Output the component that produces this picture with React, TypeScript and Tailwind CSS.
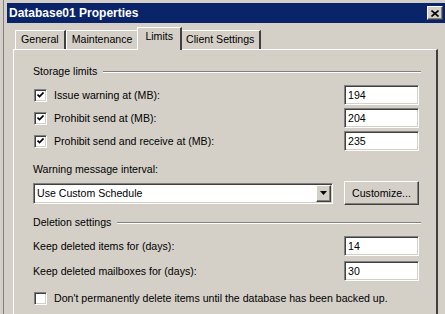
import React from 'react';

const raised =
  'border border-t-white border-l-white border-r-[#404040] border-b-[#404040] shadow-[inset_-1px_-1px_0_#808080]';
const sunken =
  'border border-t-[#808080] border-l-[#808080] border-r-white border-b-white shadow-[inset_1px_1px_0_#404040,inset_-1px_-1px_0_#d4d0c8]';

const CheckBox = ({ checked }: { checked?: boolean }) => (
  <div className={`w-[13px] h-[13px] bg-white flex items-center justify-center shrink-0 ${sunken}`}>
    {checked && (
      <svg width="7" height="7" viewBox="0 0 7 7">
        <path d="M0.5 2.5 L2.5 4.5 L6.5 0.5" fill="none" stroke="#000" strokeWidth="1.7" />
      </svg>
    )}
  </div>
);

const TextBox = ({ value }: { value: string }) => (
  <div className={`w-[75px] h-[20px] bg-white flex items-center pl-[3px] ${sunken}`}>{value}</div>
);

const GroupHeader = ({ title }: { title: string }) => (
  <div className="flex items-center h-[13px]">
    <span>{title}</span>
    <div className="flex-1 ml-[6px] h-[2px] border-t border-t-[#808080] border-b border-b-white" />
  </div>
);

const CheckRow = ({ label, value }: { label: string; value: string }) => (
  <div className="flex items-center h-[20px]">
    <div className="ml-[1px]">
      <CheckBox checked />
    </div>
    <span className="ml-[7px] flex-1">{label}</span>
    <div className="mr-[2px]">
      <TextBox value={value} />
    </div>
  </div>
);

const Tab = ({ label, active }: { label: string; active?: boolean }) => (
  <div
    className={
      active
        ? 'relative z-10 h-[23px] -mx-[2px] px-[7px] pt-[2px] bg-[#d4d0c8] border-t border-l border-t-white border-l-white border-r-2 border-r-[#404040]'
        : 'h-[19px] mt-[3px] px-[5px] pt-[2px] border-t border-l border-t-white border-l-white border-r-2 border-r-[#404040]'
    }
  >
    {label}
  </div>
);

export default function App() {
  return (
    <div
      className="w-[445px] h-[314px] overflow-hidden bg-[#d4d0c8] text-black text-[10.6px] leading-[13px] pl-[3px]"
      style={{ fontFamily: '"Liberation Sans", Arial, sans-serif' }}
    >
      <div className="h-full border-l border-l-[#808080] pl-[3px] pt-[3px] flex flex-col">
        <div className="h-[20px] bg-[#0a246a] flex items-center justify-between pl-[2px] pr-[2px]">
          <span className="text-white font-bold text-[12px]">Database01 Properties</span>
          <div className={`w-[16px] h-[14px] bg-[#d4d0c8] flex items-center justify-center ${raised}`}>
            <svg width="8" height="7" viewBox="0 0 8 7">
              <path d="M0.5 0.5 L7.5 6.5 M7.5 0.5 L0.5 6.5" stroke="#000" strokeWidth="1.6" />
            </svg>
          </div>
        </div>

        <div className="flex pl-[8px] mt-[4px] h-[23px]">
          <Tab label="General" />
          <Tab label="Maintenance" />
          <Tab label="Limits" active />
          <Tab label="Client Settings" />
        </div>

        <div className="-mt-[1px] ml-[6px] w-[425px] flex-1 border-t border-l border-t-white border-l-white border-r-2 border-r-[#404040] pl-[19px] pr-[15px]">
          <div className="mt-[15px]">
            <GroupHeader title="Storage limits" />
          </div>
          <div className="flex flex-col gap-[3px] mt-[7px]">
            <CheckRow label="Issue warning at (MB):" value="194" />
            <CheckRow label="Prohibit send at (MB):" value="204" />
            <CheckRow label="Prohibit send and receive at (MB):" value="235" />
          </div>

          <div className="mt-[12px]">Warning message interval:</div>
          <div className="flex items-center mt-[5px]">
            <div className={`w-[300px] h-[21px] bg-white flex items-center justify-between pl-[3px] pr-[1px] ${sunken}`}>
              <span>Use Custom Schedule</span>
              <div className={`w-[15px] h-[17px] bg-[#d4d0c8] flex items-center justify-center ${raised}`}>
                <svg width="7" height="4" viewBox="0 0 7 4">
                  <path d="M0 0 H7 L3.5 4 Z" fill="#000" />
                </svg>
              </div>
            </div>
            <div
              className={`ml-auto mr-[2px] w-[75px] h-[24px] bg-[#d4d0c8] flex items-center justify-center ${raised}`}
            >
              Customize...
            </div>
          </div>

          <div className="mt-[11px]">
            <GroupHeader title="Deletion settings" />
          </div>
          <div className="flex flex-col gap-[5px] mt-[7px]">
            <div className="flex items-center justify-between h-[20px]">
              <span>Keep deleted items for (days):</span>
              <div className="mr-[2px]">
                <TextBox value="14" />
              </div>
            </div>
            <div className="flex items-center justify-between h-[20px]">
              <span>Keep deleted mailboxes for (days):</span>
              <div className="mr-[2px]">
                <TextBox value="30" />
              </div>
            </div>
          </div>

          <div className="flex items-center mt-[11px] h-[13px]">
            <div className="ml-[1px]">
              <CheckBox />
            </div>
            <span className="ml-[7px]">Don't permanently delete items until the database has been backed up.</span>
          </div>
        </div>
      </div>
    </div>
  );
}
